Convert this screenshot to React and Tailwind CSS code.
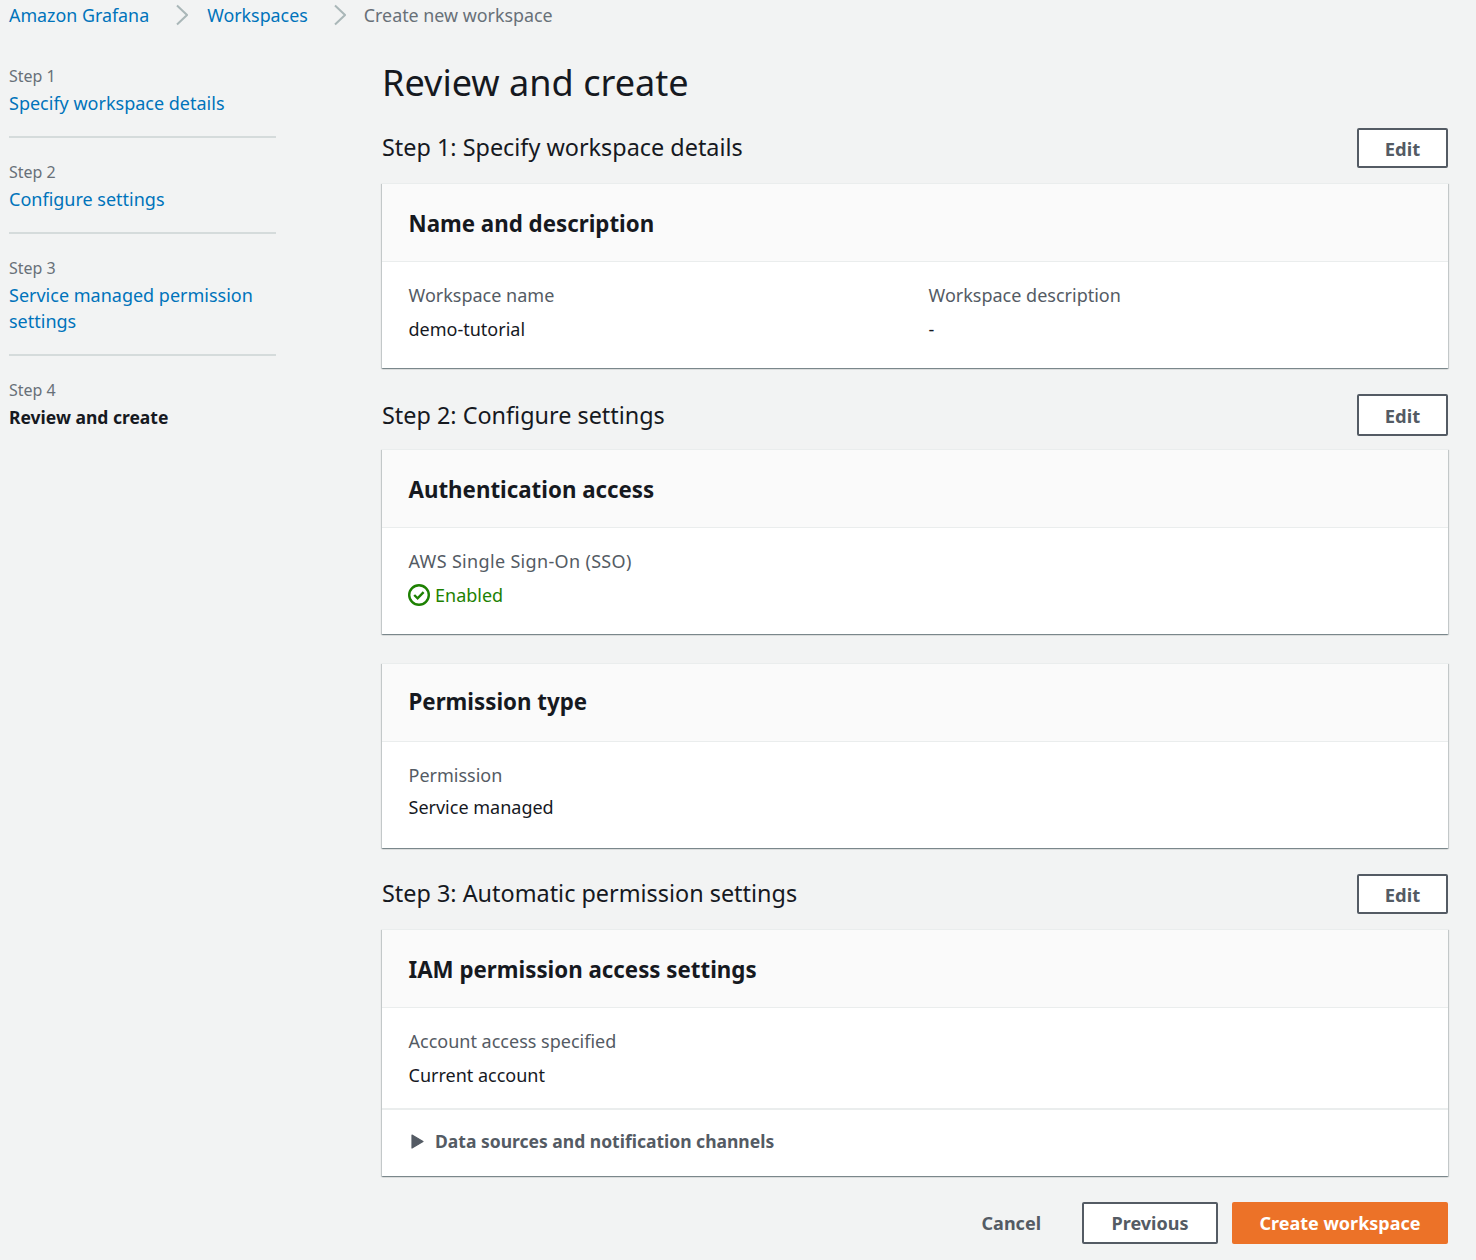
function Sidebar() {
  const steps = [
    { n: "Step 1", t: ["Specify workspace details"] },
    { n: "Step 2", t: ["Configure settings"] },
    { n: "Step 3", t: ["Service managed permission", "settings"] },
  ];
  return (
    <nav className="w-[267px] shrink-0 pt-[33px]">
      {steps.map((s) => (
        <div key={s.n} className="border-b-2 border-[#d5dbdb] pb-[20px] mb-[21px]">
          <div className="text-[16px] leading-[26px] text-[#687078]">{s.n}</div>
          <a className="block mt-[1px] text-[18px] leading-[26px] text-[#0073bb]">
            {s.t.map((l) => (
              <div key={l}>{l}</div>
            ))}
          </a>
        </div>
      ))}
      <div className="text-[16px] leading-[26px] text-[#687078]">Step 4</div>
      <div className="mt-[1px] text-[17.5px] leading-[26px] font-bold text-[#16191f]">Review and create</div>
    </nav>
  );
}

function Chevron() {
  return (
    <svg width="12" height="22" viewBox="0 0 12 22" fill="none" className="shrink-0">
      <path d="M1 1.5L11 11 1 20.5" stroke="#aab7b8" strokeWidth="2" />
    </svg>
  );
}

function Card({ title, children, className = "", titleClass = "pt-[2px]" }) {
  return (
    <section className={"bg-white shadow-[0_1px_1px_0_rgba(0,28,36,0.3),1px_1px_1px_0_rgba(0,28,36,0.15),-1px_1px_1px_0_rgba(0,28,36,0.15)] " + className}>
      <div className={"h-[79px] flex items-center px-[26.5px] bg-[#fafafa] border-y border-[#eaeded] " + titleClass}>
        <h3 className="text-[22.3px] leading-[32px] font-bold text-[#16191f]">{title}</h3>
      </div>
      {children}
    </section>
  );
}

function Field({ label, children, labelClass = "" }) {
  return (
    <div>
      <div className={"text-[18px] leading-[26px] text-[#545b64] " + labelClass}>{label}</div>
      <div className="mt-[8px] text-[18px] leading-[26px] text-[#16191f]">{children}</div>
    </div>
  );
}

function StepHead({ title, h = "h-[40px]", className = "", headClass = "-mt-[2px]" }) {
  return (
    <div className={"flex items-center justify-between " + className}>
      <h2 className={"text-[23.4px] leading-[34px] text-[#16191f] " + headClass}>{title}</h2>
      <button className={"w-[91px] pt-[2px] bg-white border-2 border-[#545b64] rounded-[2px] text-[18.4px] font-bold text-[#545b64] " + h}>Edit</button>
    </div>
  );
}

export default function App() {
  return (
    <div
      className="min-h-[1260px] bg-[#f2f3f3] pl-[9px] pr-[28px] overflow-hidden"
      style={{ fontFamily: '"Noto Sans", "Open Sans", sans-serif' }}
    >
      <header className="h-[30px] flex items-center text-[17.85px] leading-[26px]">
        <a className="text-[#0073bb]">Amazon Grafana</a>
        <span className="ml-[27px] mr-[19px]"><Chevron /></span>
        <a className="text-[#0073bb]">Workspaces</a>
        <span className="ml-[26px] mr-[18px]"><Chevron /></span>
        <span className="text-[#687078]">Create new workspace</span>
      </header>
      <div className="flex">
        <Sidebar />
        <main className="flex-1 ml-[106px] pt-[29px]">
          <h1 className="text-[36.1px] leading-[46px] text-[#16191f]">Review and create</h1>
          <StepHead title="Step 1: Specify workspace details" className="mt-[23px]" />
          <Card title="Name and description" className="mt-[15px]">
            <div className="grid grid-cols-[520px_1fr] px-[26.5px] pt-[20px] pb-[26px]">
              <Field label="Workspace name">demo-tutorial</Field>
              <Field label="Workspace description">-</Field>
            </div>
          </Card>
          <StepHead title="Step 2: Configure settings" h="h-[42px]" headClass="" className="mt-[26px]" />
          <Card title="Authentication access" className="mt-[13px]">
            <div className="px-[26.5px] pt-[20px] pb-[26px]">
              <Field label="AWS Single Sign-On (SSO)" labelClass="tracking-[0.33px]">
                <span className="flex items-center gap-[5px] text-[#1d8102]">
                  <svg width="22" height="22" viewBox="0 0 22 22" fill="none" className="-ml-[0.5px]">
                    <circle cx="11" cy="11" r="9.8" stroke="#1d8102" strokeWidth="2.4" />
                    <path d="M6.2 11l3.4 3.4 6-6.2" stroke="#1d8102" strokeWidth="2.4" />
                  </svg>
                  Enabled
                </span>
              </Field>
            </div>
          </Card>
          <Card title="Permission type" titleClass="pb-[2px]" className="mt-[29px]">
            <div className="px-[26.5px] pt-[20px] pb-[28px]">
              <div className="text-[18px] leading-[26px] text-[#545b64]">Permission</div>
              <div className="mt-[6px] text-[18px] leading-[26px] text-[#16191f]">Service managed</div>
            </div>
          </Card>
          <StepHead title="Step 3: Automatic permission settings" className="mt-[26px]" />
          <Card title="IAM permission access settings" className="mt-[15px]">
            <div className="px-[26.5px] pt-[20px] pb-[20px] border-b-2 border-[#eaeded]">
              <Field label="Account access specified">Current account</Field>
            </div>
            <div className="h-[66px] flex items-center px-[29px] pb-[4px] text-[17.5px] font-bold text-[#545b64]">
              <svg width="13" height="15" viewBox="0 0 13 15" className="mr-[11px]">
                <path d="M1 1l11 6.5-11 6.5z" fill="#545b64" stroke="#545b64" strokeWidth="1.2" strokeLinejoin="round" />
              </svg>
              Data sources and notification channels
            </div>
          </Card>
          <div className="mt-[26px] flex items-center justify-end text-[18px] font-bold">
            <button className="text-[#545b64] mr-[41px]">Cancel</button>
            <button className="w-[136px] h-[42px] bg-white border-2 border-[#545b64] rounded-[2px] text-[#545b64] mr-[14px]">Previous</button>
            <button className="w-[216px] h-[42px] bg-[#ec7228] rounded-[2px] text-white">Create workspace</button>
          </div>
        </main>
      </div>
    </div>
  );
}
